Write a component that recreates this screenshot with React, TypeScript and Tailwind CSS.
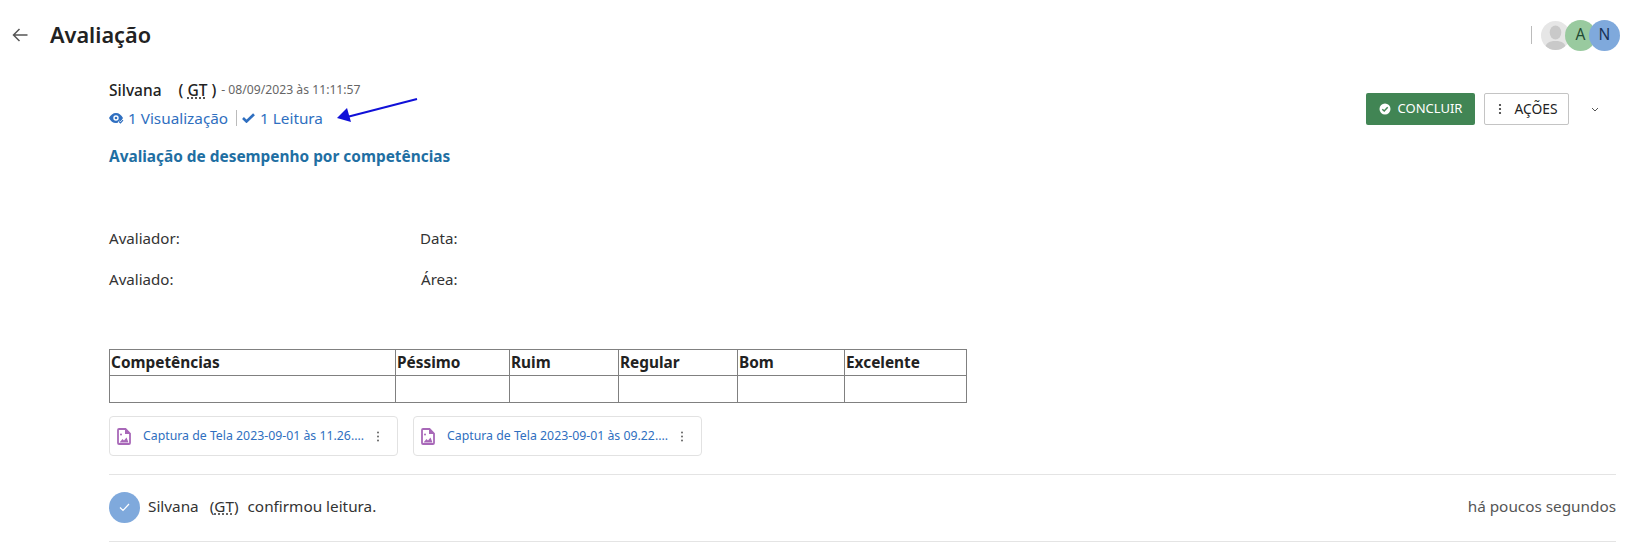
import React from "react";

const font = { fontFamily: '"Noto Sans", "Open Sans", sans-serif' };

function FileCard({ name }: { name: string }) {
  return (
    <div className="flex h-[40px] w-[289px] items-center rounded-[4px] border border-[#e2e2e2] pl-[7px]">
      <svg width="14" height="17" viewBox="0 0 14 17" className="shrink-0">
        <path d="M2 1h6.500L13 5.500V15a1 1 0 0 1-1 1H2a1 1 0 0 1-1-1V2a1 1 0 0 1 1-1z" fill="none" stroke="#a868b8" strokeWidth="1.800" />
        <path d="M8 1v5h5z" fill="#a868b8" />
        <path d="M2.500 14.500l3-3.500 1.500 1.500 2.500-3 2 5z" fill="#a868b8" />
        <circle cx="4" cy="6.500" r="1" fill="#a868b8" />
      </svg>
      <span className="ml-[12px] w-[221px] whitespace-nowrap text-[12.300px] leading-none text-[#2f6fc0]">{name}</span>
      <svg width="4" height="11" viewBox="0 0 4 11" className="ml-[12px] shrink-0" fill="#666">
        <circle cx="2" cy="1.500" r="1" />
        <circle cx="2" cy="5.500" r="1" />
        <circle cx="2" cy="9.500" r="1" />
      </svg>
    </div>
  );
}

const cols = [
  { t: "Competências", w: "w-[286px]" },
  { t: "Péssimo", w: "w-[114px]" },
  { t: "Ruim", w: "w-[109px]" },
  { t: "Regular", w: "w-[119px]" },
  { t: "Bom", w: "w-[107px]" },
  { t: "Excelente", w: "w-[122px]" },
];

export default function App() {
  return (
    <div style={font} className="relative h-[549px] w-[1640px] overflow-hidden bg-white text-[#222]">
      <header className="flex h-[70px] items-center justify-between pr-[20px]">
        <div className="flex items-center">
          <svg width="16" height="14" viewBox="0 0 16 14" className="ml-[12px]" fill="none" stroke="#555" strokeWidth="1.500">
            <path d="M15.500 7H1.500M7.500 1L1.500 7l6 6" />
          </svg>
          <h1 className="ml-[22px] pb-[1px] text-[21.700px] font-semibold leading-none text-[#222]">Avaliação</h1>
        </div>
        <div className="flex items-center">
          <div className="mr-[9px] h-[18px] w-px bg-[#bbb]" />
          <div className="relative z-0 flex h-[29px] w-[29px] items-center justify-center overflow-hidden rounded-full bg-[#e6e6e6]">
            <svg width="29" height="29" viewBox="0 0 29 29" fill="#c9c9c9">
              <ellipse cx="14.500" cy="11.500" rx="5.800" ry="7" />
              <path d="M4 29c0-7 4-9 10.500-9S25 22 25 29z" />
            </svg>
          </div>
          <div className="relative z-10 -ml-[5px] flex h-[31px] w-[31px] items-center justify-center rounded-full bg-[#99ca9f] text-[15.500px] text-[#224a33]">A</div>
          <div className="relative z-20 -ml-[7px] flex h-[31px] w-[31px] items-center justify-center rounded-full bg-[#7fa9dc] text-[15.500px] text-[#1a3358]">N</div>
        </div>
      </header>

      <main className="pl-[109px] pr-[24px]">
        <div className="flex items-start justify-between">
          <div>
            <div className="flex items-center pt-[11px] text-[15.500px] leading-[18px]">
              <span className="font-medium">Silvana</span>
              <span className="ml-[17px] font-medium">
                ( <span className="underline decoration-dotted underline-offset-2">GT</span> )
              </span>
              <span className="ml-[5px] text-[12.200px] text-[#666]">- 08/09/2023 às 11:11:57</span>
            </div>
            <div className="mt-[10px] flex items-center text-[15.300px] leading-[18px] text-[#2f6fc0]">
              <svg width="15" height="12" viewBox="0 0 15 12" className="mr-[4px]">
                <path fillRule="evenodd" fill="#2f6fc0" d="M7 1c3 0 5.500 2 7 5-1.500 3-4 5-7 5s-5.500-2-7-5c1.500-3 4-5 7-5zm0 2.300a2.700 2.700 0 1 0 0 5.400 2.700 2.700 0 0 0 0-5.400z" />
                <circle cx="7" cy="6" r="1.300" fill="#2f6fc0" />
                <path d="M9.500 9.500l2 1.800 3-3.300" fill="none" stroke="#fff" strokeWidth="2.500" />
                <path d="M10 9.500l1.500 1.300 2.500-2.600" fill="none" stroke="#2f6fc0" strokeWidth="1.200" />
              </svg>
              <span>1 Visualização</span>
              <span className="ml-[8px] mr-[5px] h-[16px] w-px bg-[#bbb]" />
              <svg width="13" height="10" viewBox="0 0 13 10" fill="none" stroke="#2f6fc0" strokeWidth="2.600" className="mr-[5px]">
                <path d="M1 5l3.500 3.500L12 1.200" />
              </svg>
              <span>1 Leitura</span>
            </div>
          </div>
          <div className="mt-[23px] flex items-center">
            <button className="flex h-[32px] w-[109px] items-center justify-center rounded-[2px] bg-[#418554] text-[13px] text-white">
              <svg width="12" height="12" viewBox="0 0 12 12" className="mr-[7px]">
                <circle cx="6" cy="6" r="5.500" fill="#fff" />
                <path d="M3.300 6.200l1.900 1.800 3.500-3.700" fill="none" stroke="#418554" strokeWidth="1.500" />
              </svg>
              CONCLUIR
            </button>
            <button className="ml-[9px] flex h-[32px] w-[85px] items-center justify-center rounded-[2px] border border-[#c4c4c4] bg-white pl-[3px] text-[13.800px] text-[#222]">
              <svg width="4" height="12" viewBox="0 0 4 12" fill="#333" className="mr-[12px]">
                <circle cx="2" cy="2" r="1.100" />
                <circle cx="2" cy="6" r="1.100" />
                <circle cx="2" cy="10" r="1.100" />
              </svg>
              AÇÕES
            </button>
            <svg width="8" height="5" viewBox="0 0 8 5" fill="none" stroke="#555" strokeWidth="1" className="ml-[22px] mr-[17px]">
              <path d="M1 1l3 3 3-3" />
            </svg>
          </div>
        </div>

        <h2 className="mt-[20px] text-[15.400px] font-bold leading-[20px] text-[#1f6fa3]">Avaliação de desempenho por competências</h2>

        <div className="mt-[61px] grid w-[420px] grid-cols-[311px_1fr] gap-y-[21px] text-[15.100px] leading-[20px] text-[#333]">
          <span>Avaliador:</span>
          <span>Data:</span>
          <span>Avaliado:</span>
          <span className="pl-[1px]">Área:</span>
        </div>

        <table className="mt-[60px] w-[857px] table-fixed border-collapse border border-[#808080] text-[15.400px]">
          <tbody>
            <tr className="h-[26px]">
              {cols.map((c) => (
                <td key={c.t} className={`${c.w} border border-[#808080] px-px py-0 align-middle font-bold leading-[20px] text-[#222]`}>
                  {c.t}
                </td>
              ))}
            </tr>
            <tr className="h-[27px]">
              {cols.map((c) => (
                <td key={c.t} className="border border-[#808080]" />
              ))}
            </tr>
          </tbody>
        </table>

        <div className="mt-[13px] flex gap-[15px]">
          <FileCard name="Captura de Tela 2023-09-01 às 11.26...." />
          <FileCard name="Captura de Tela 2023-09-01 às 09.22...." />
        </div>

        <div className="mt-[18px] flex h-[68px] items-center justify-between border-y border-[#e4e4e4] pb-[2px]">
          <div className="flex items-center">
            <div className="flex h-[31px] w-[31px] items-center justify-center rounded-full bg-[#7fa9dc]">
              <svg width="11" height="9" viewBox="0 0 11 9" fill="none" stroke="#fff" strokeWidth="1.200">
                <path d="M1 4.500l3 3L10 1" />
              </svg>
            </div>
            <span className="ml-[8px] pb-[1px] text-[15.300px] text-[#333]">Silvana</span>
            <span className="ml-[11px] pb-[1px] text-[15.300px] text-[#333]">
              (<span className="underline decoration-dotted underline-offset-2">GT</span>)
            </span>
            <span className="ml-[9px] pb-[1px] text-[15.300px] text-[#333]">confirmou leitura.</span>
          </div>
          <span className="pb-[1px] text-[15.300px] text-[#555]">há poucos segundos</span>
        </div>
      </main>

      <svg width="84" height="28" viewBox="0 0 84 28" className="absolute left-[335px] top-[97px]">
        <path d="M82 2L14 19.500" stroke="#1010d8" strokeWidth="2" fill="none" />
        <path d="M2 21L12 11l4 14z" fill="#1010d8" />
      </svg>
    </div>
  );
}
